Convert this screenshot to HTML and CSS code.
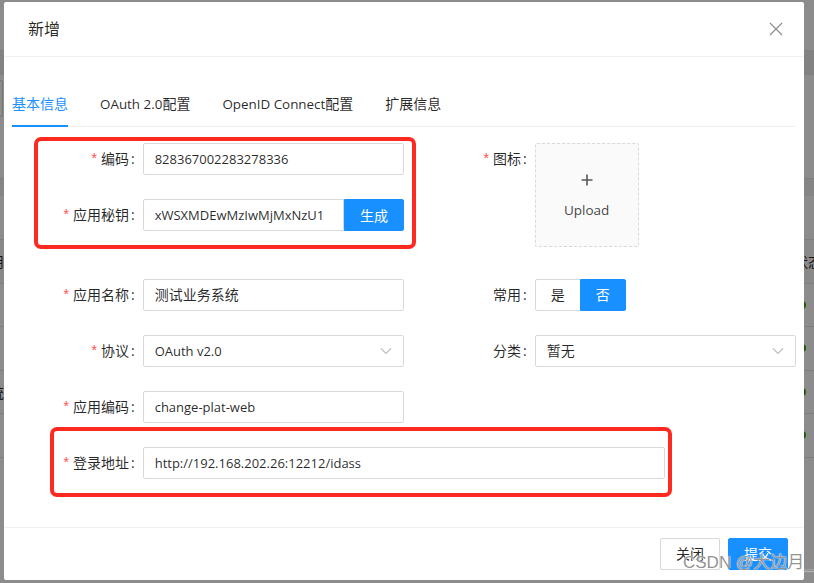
FILE: index.html
```html
<!DOCTYPE html>
<html lang="zh-CN">
<head>
<meta charset="utf-8">
<title>新增</title>
<link rel="stylesheet" href="styles.css">
</head>
<body>
<div class="backdrop">
  <div class="bg-band"></div>
  <div class="bg-search"></div>
  <div class="bg-band2"></div>
  <div class="bg-table">
    <div class="bg-row bg-head"><span class="bg-left">应用</span><span class="bg-right">状态</span></div>
    <div class="bg-row"><span></span><span class="dot"></span></div>
    <div class="bg-row"><span></span><span class="dot"></span></div>
    <div class="bg-row"><span class="bg-left">系统</span><span class="dot"></span></div>
    <div class="bg-row"><span></span><span class="dot"></span></div>
    <div class="bg-row"><span></span><span></span></div>
  </div>
</div>
<div class="mask"></div>

<div class="modal">
  <div class="modal-header">
    <div class="modal-title">新增</div>
    <button class="modal-close" type="button" aria-label="关闭">
      <svg width="14" height="14" viewBox="0 0 14 14"><path d="M1 1 L13 13 M13 1 L1 13" stroke="#8c8c8c" stroke-width="1.2" fill="none"/></svg>
    </button>
  </div>

  <div class="modal-body">
    <div class="tabs">
      <div class="tab active">基本信息</div>
      <div class="tab"><span class="en-tab">OAuth 2.0</span>配置</div>
      <div class="tab"><span class="en-tab">OpenID Connect</span>配置</div>
      <div class="tab">扩展信息</div>
    </div>

    <div class="form">
      <div class="row">
        <div class="col">
          <div class="item">
            <div class="label required">编码</div>
            <div class="control"><div class="input en">828367002283278336</div></div>
          </div>
          <div class="item">
            <div class="label required">应用秘钥</div>
            <div class="control">
              <div class="group">
                <div class="input input-left en">xWSXMDEwMzIwMjMxNzU1</div>
                <button class="btn-gen" type="button">生成</button>
              </div>
            </div>
          </div>
        </div>
        <div class="col">
          <div class="item item-upload">
            <div class="label required">图标</div>
            <div class="control">
              <div class="upload">
                <svg width="16" height="16" viewBox="0 0 16 16"><path d="M8 2.5 V13.5 M2.5 8 H13.5" stroke="#595959" stroke-width="1.6" fill="none"/></svg>
                <div class="upload-text">Upload</div>
              </div>
            </div>
          </div>
        </div>
      </div>

      <div class="row">
        <div class="col">
          <div class="item">
            <div class="label required">应用名称</div>
            <div class="control"><div class="input">测试业务系统</div></div>
          </div>
        </div>
        <div class="col">
          <div class="item">
            <div class="label">常用</div>
            <div class="control">
              <div class="radio-group">
                <div class="radio">是</div>
                <div class="radio checked">否</div>
              </div>
            </div>
          </div>
        </div>
      </div>

      <div class="row">
        <div class="col">
          <div class="item">
            <div class="label required">协议</div>
            <div class="control">
              <div class="input select"><span class="en">OAuth v2.0</span>
                <svg width="12" height="12" viewBox="0 0 12 12"><path d="M1 3.5 L6 8.5 L11 3.5" stroke="#bfbfbf" stroke-width="1.1" fill="none"/></svg>
              </div>
            </div>
          </div>
        </div>
        <div class="col">
          <div class="item">
            <div class="label">分类</div>
            <div class="control">
              <div class="input select"><span>暂无</span>
                <svg width="12" height="12" viewBox="0 0 12 12"><path d="M1 3.5 L6 8.5 L11 3.5" stroke="#bfbfbf" stroke-width="1.1" fill="none"/></svg>
              </div>
            </div>
          </div>
        </div>
      </div>

      <div class="row">
        <div class="col">
          <div class="item">
            <div class="label required">应用编码</div>
            <div class="control"><div class="input en">change-plat-web</div></div>
          </div>
        </div>
        <div class="col"></div>
      </div>

      <div class="item item-wide">
        <div class="label required">登录地址</div>
        <div class="control"><div class="input en">http://192.168.202.26:12212/idass</div></div>
      </div>
    </div>
  </div>

  <div class="modal-footer">
    <button class="btn" type="button">关闭</button>
    <button class="btn btn-primary" type="button">提交</button>
  </div>
</div>

<div class="mark mark-1"></div>
<div class="mark mark-2"></div>
<div class="watermark">CSDN @大边月_</div>
</body>
</html>
```

FILE: styles.css
```css
* { box-sizing: border-box; margin: 0; padding: 0; }

html, body {
  width: 814px;
  height: 583px;
  overflow: hidden;
}

body {
  position: relative;
  background: #fff;
  font-family: "Open Sans", "Noto Sans CJK SC", sans-serif;
  font-size: 14px;
  color: rgba(0, 0, 0, 0.85);
}

.en { font-size: 13px; }
.en-tab { font-size: 13.4px; }

/* ---------- page behind the dialog ---------- */
.backdrop {
  position: absolute;
  inset: 0;
  padding-top: 50px;
  background: #fff;
}
.bg-band { height: 25px; background: #ededed; }
.bg-search {
  margin: 5px 0 0 -100px;
  width: 103px;
  height: 37px;
  border: 1px solid #d9d9d9;
  border-radius: 2px;
}
.bg-band2 {
  margin-top: 61px;
  height: 18px;
  background: #f2f2f2;
  border-top: 1px solid #e6e6e6;
}
.bg-table { margin-top: 43px; }
.bg-row {
  height: 43.5px;
  border-top: 1px solid #e8e8e8;
  display: flex;
  justify-content: space-between;
  align-items: center;
}
.bg-head { background: #fafafa; }
.bg-left { margin-left: -24px; }
.bg-right { margin-right: -8px; }
.dot {
  width: 8px;
  height: 8px;
  border-radius: 50%;
  background: #3f9e12;
  margin-right: 8px;
}

.mask {
  position: absolute;
  inset: 0;
  background: rgba(0, 0, 0, 0.45);
}

/* ---------- dialog ---------- */
.modal {
  position: absolute;
  left: 4px;
  top: 2px;
  width: 800px;
  background: #fff;
  border-radius: 2px;
}

.modal-header {
  display: flex;
  align-items: center;
  justify-content: space-between;
  height: 55px;
  padding-left: 24px;
  border-bottom: 1px solid #f0f0f0;
}
.modal-title {
  font-size: 16px;
  line-height: 22px;
  font-weight: 400;
}
.modal-close {
  width: 56px;
  height: 54px;
  border: 0;
  background: none;
  display: flex;
  align-items: center;
  justify-content: center;
}

.modal-body { padding: 24px 8px; }

.tabs {
  display: flex;
  gap: 32px;
  border-bottom: 1px solid #f0f0f0;
  margin-bottom: 16px;
}
.tab {
  position: relative;
  padding: 12px 0 11px;
  line-height: 22px;
  white-space: nowrap;
}
.tab.active { color: #1890ff; }
.tab.active::after {
  content: "";
  position: absolute;
  left: 0;
  right: 0;
  bottom: -1px;
  height: 2px;
  background: #1890ff;
}

/* ---------- form ---------- */
.row { display: flex; }
.col { width: 50%; }

.item {
  display: flex;
  margin-bottom: 24px;
}
.label {
  flex: none;
  width: 33.3333%;
  text-align: right;
  line-height: 32px;
  white-space: nowrap;
}
.label::after {
  content: ":";
  margin: 0 8px 0 2px;
}
.required::before {
  content: "*";
  display: inline-block;
  margin-right: 4px;
  color: #ff4d4f;
  font-family: "Liberation Sans", sans-serif;
  font-size: 14px;
  line-height: 1;
  vertical-align: 1px;
}
.control { flex: 1; min-width: 0; }

.item-wide .label { width: 16.6667%; }
.item-wide .control { flex: none; width: 66.6667%; }

.input {
  height: 32px;
  padding: 4px 11px;
  line-height: 22px;
  border: 1px solid #d9d9d9;
  border-radius: 2px;
  background: #fff;
  white-space: nowrap;
  overflow: hidden;
}
.input.en { font-size: 13px; }

.group { display: flex; }
.input-left {
  flex: 1;
  border-radius: 2px 0 0 2px;
}
.btn-gen {
  flex: none;
  width: 60px;
  height: 32px;
  border: 1px solid #1890ff;
  border-radius: 0 2px 2px 0;
  background: #1890ff;
  color: #fff;
  font-family: inherit;
  font-size: 14px;
}

.select {
  display: flex;
  align-items: center;
  justify-content: space-between;
}

.item-upload { margin-bottom: 24px; }
.upload {
  width: 104px;
  height: 104px;
  margin: 0 8px 8px 0;
  padding-top: 28px;
  border: 1px dashed #d9d9d9;
  border-radius: 2px;
  background: #fafafa;
  display: flex;
  flex-direction: column;
  align-items: center;
}
.upload-text {
  margin-top: 11px;
  line-height: 22px;
  color: rgba(0, 0, 0, 0.75);
  font-size: 13.5px;
}

.radio-group { display: inline-flex; }
.radio {
  height: 32px;
  padding: 0 15px;
  line-height: 30px;
  border: 1px solid #d9d9d9;
  background: #fff;
}
.radio:first-child { border-radius: 2px 0 0 2px; }
.radio.checked {
  margin-left: -1px;
  border-color: #1890ff;
  background: #1890ff;
  color: #fff;
  border-radius: 0 2px 2px 0;
}

/* ---------- footer ---------- */
.modal-footer {
  display: flex;
  justify-content: flex-end;
  gap: 8px;
  padding: 10px 16px;
  border-top: 1px solid #f0f0f0;
}
.btn {
  height: 32px;
  padding: 4px 15px;
  border: 1px solid #d9d9d9;
  border-radius: 2px;
  background: #fff;
  color: rgba(0, 0, 0, 0.85);
  font-family: inherit;
  font-size: 14px;
  line-height: 22px;
}
.btn-primary {
  border-color: #1890ff;
  background: #1890ff;
  color: #fff;
}

/* ---------- annotations on top of the screenshot ---------- */
.mark {
  position: absolute;
  border: 4px solid #ff2a1f;
  border-radius: 7px;
}
.mark-1 { left: 34px; top: 137px; width: 382px; height: 112px; }
.mark-2 { left: 50px; top: 427px; width: 622px; height: 70px; }

.watermark {
  position: absolute;
  left: 683px;
  top: 551px;
  font-family: "Liberation Sans", "Noto Sans CJK SC", sans-serif;
  font-size: 17px;
  line-height: 24px;
  color: rgba(110, 110, 110, 0.75);
  text-shadow: 0 0 1px #fff, 0 0 1px #fff;
  white-space: nowrap;
}
```
